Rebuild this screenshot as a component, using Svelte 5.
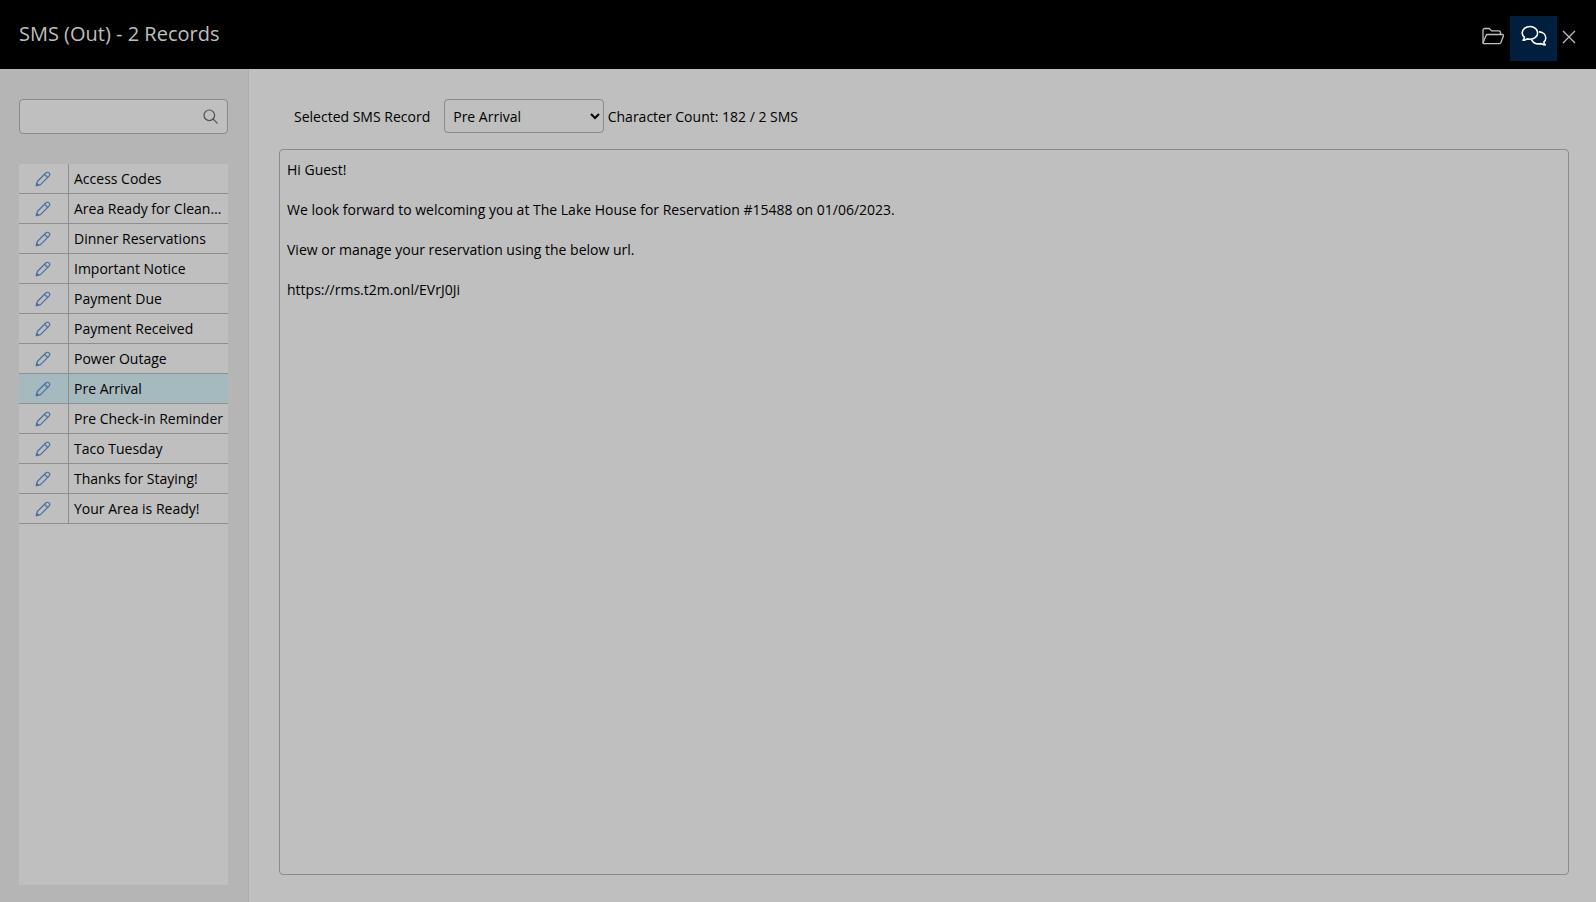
<script lang="ts">
    let templates = [
        "Access Codes",
        "Area Ready for Cleaning",
        "Dinner Reservations",
        "Important Notice",
        "Payment Due",
        "Payment Received",
        "Power Outage",
        "Pre Arrival",
        "Pre Check-in Reminder",
        "Taco Tuesday",
        "Thanks for Staying!",
        "Your Area is Ready!"
    ];

    let selected = "Pre Arrival";
    let records = ["Pre Arrival", "Your Area is Ready!"];

    let message = `Hi Guest!

We look forward to welcoming you at The Lake House for Reservation #15488 on 01/06/2023.

View or manage your reservation using the below url.

https://rms.t2m.onl/EVrJ0Ji`;
</script>

<style>
    :global(body) {
        font-family: "Open Sans", "Noto Sans", sans-serif;
        font-size: 14px;
        color: #000;
        background: #bfbfbf;
    }

    .page {
        height: 902px;
        display: flex;
        flex-direction: column;
        overflow: hidden;
    }

    .top_bar {
        height: 69px;
        flex: none;
        background: #000;
        display: flex;
        justify-content: space-between;
        align-items: flex-start;
        padding-left: 19px;
    }

    .top_bar h1 {
        margin: 20px 0 0;
        font-size: 20px;
        line-height: 27px;
        font-weight: 400;
        color: #bfbfbf;
    }

    .actions {
        display: flex;
        align-items: center;
        margin-top: 16px;
        padding-right: 20px;
    }

    .action {
        display: flex;
        justify-content: center;
        align-items: center;
        height: 45px;
        box-sizing: border-box;
        padding-bottom: 4px;
        color: #bfbfbf;
    }

    .folder { width: 47px; padding-left: 12px; }
    .chat { width: 47px; background: #001f3f; color: #fff; }
    .close { margin-left: 5px; width: 14px; }

    .content {
        flex: 1;
        display: flex;
        min-height: 0;
    }

    aside {
        width: 249px;
        box-sizing: border-box;
        flex: none;
        background: #b5b5b5;
        border-right: 1px solid #adadad;
        padding: 30px 20px 17px 19px;
        display: flex;
        flex-direction: column;
    }

    .search {
        height: 35px;
        box-sizing: border-box;
        border: 1px solid #8a8a8a;
        border-radius: 4px;
        background: #bfbfbf;
        display: flex;
        align-items: center;
        justify-content: flex-end;
        padding-right: 9px;
        color: #4f4f4f;
        flex: none;
    }

    .list {
        margin-top: 30px;
        flex: 1;
        background: #bfbfbf;
    }

    .row {
        display: flex;
        height: 30px;
        box-sizing: border-box;
        border-bottom: 1px solid #8f8f8f;
    }

    .row.active {
        background: #a5babf;
    }

    .edit {
        width: 50px;
        flex: none;
        box-sizing: border-box;
        border-right: 1px solid #8f8f8f;
        display: flex;
        justify-content: center;
        align-items: center;
        color: #4a6ea3;
        padding-right: 1px;
    }

    .name {
        padding-left: 5px;
        line-height: 29px;
        white-space: nowrap;
        overflow: hidden;
        text-overflow: ellipsis;
        min-width: 0;
        padding-right: 5px;
    }

    main {
        flex: 1;
        min-width: 0;
        display: flex;
        flex-direction: column;
        padding: 30px 27px 27px 30px;
    }

    .toolbar {
        display: flex;
        align-items: center;
        height: 34px;
        flex: none;
        margin-bottom: 16px;
    }

    .toolbar label {
        margin-left: 15px;
        margin-right: 14px;
    }

    .toolbar select {
        width: 160px;
        height: 34px;
        box-sizing: border-box;
        border: 1px solid #8a8a8a;
        border-radius: 4px;
        background: #bfbfbf;
        padding: 0 5px 0 4px;
        margin-right: 3.5px;
        font: inherit;
        color: #000;
        outline: none;
    }

    .message {
        flex: 1;
        resize: none;
        box-sizing: border-box;
        width: 100%;
        border: 1px solid #8a8a8a;
        border-radius: 4px;
        background: #bfbfbf;
        padding: 10px 7px;
        font: inherit;
        line-height: 20px;
        color: #000;
        outline: none;
    }
</style>

<div class="page">
    <header class="top_bar">
        <h1>SMS (Out) - 2 Records</h1>
        <div class="actions">
            <div class="action folder">
                <svg width="24" height="19" viewBox="0 0 24 18" fill="none" stroke="currentColor" stroke-width="1.3" stroke-linejoin="round">
                    <path d="M2 15.5V3C2 1.9 2.7 1 3.8 1h4.4l2.4 2.4h7.2c1 0 1.7.7 1.7 1.7V7"/>
                    <path d="M2 15.6 5 8c.2-.6.8-1 1.4-1h15c.8 0 1.3.8 1 1.5l-2.6 6.7c-.3.6-.8 1-1.4 1H3c-.7 0-1.2-.3-1-.6z"/>
                </svg>
            </div>
            <div class="action chat">
                <svg width="28" height="24" viewBox="0 0 28 24" fill="none" stroke="currentColor" stroke-width="1.6" stroke-linejoin="round" stroke-linecap="round">
                    <path d="M10 1.5c4.3 0 7.6 2.8 7.6 6.4s-3.3 6.4-7.6 6.4c-1 0-2-.2-2.9-.4-1 .8-2.4 1.4-4.1 1.4.8-.8 1.3-1.8 1.4-2.9C3 11.2 2.2 9.7 2.2 7.9 2.2 4.3 5.7 1.5 10 1.5z"/>
                    <path d="M19.5 6.9c3.5.4 6.3 2.8 6.3 6 0 1.7-.8 3.1-2 4.1.1 1.1.6 2.1 1.4 2.9-1.6 0-3-.5-4-1.3-.8.2-1.6.3-2.5.3-3.1 0-5.8-1.5-6.9-3.8"/>
                </svg>
            </div>
            <div class="action close">
                <svg width="14" height="14" viewBox="0 0 14 14" fill="none" stroke="currentColor" stroke-width="1.3">
                    <path d="M1 1l12 12M13 1 1 13"/>
                </svg>
            </div>
        </div>
    </header>

    <div class="content">
        <aside>
            <div class="search">
                <svg width="15" height="15" viewBox="0 0 15 15" fill="none" stroke="currentColor" stroke-width="1.2" stroke-linecap="round">
                    <circle cx="6.3" cy="6.3" r="5.3"/>
                    <path d="M10.2 10.2 14.2 14.2"/>
                </svg>
            </div>
            <div class="list">
                {#each templates as name}
                    <div class="row" class:active={name === selected}>
                        <div class="edit">
                            <svg width="16" height="16" viewBox="0 0 16 16" fill="none" stroke="currentColor" stroke-width="1.2" stroke-linejoin="round">
                                <path d="M1.3 14.7 2.3 10.5 10.8 2C11.8 1 13.1 1 14 1.9 14.9 2.8 14.9 4.1 14 5.1L5.5 13.6Z"/>
                                <path d="M9.5 3.3 12.7 6.5"/>
                                <path d="M1.3 14.7 1.8 12.5 3.500 14.200Z" fill="currentColor"/>
                            </svg>
                        </div>
                        <div class="name">{name}</div>
                    </div>
                {/each}
            </div>
        </aside>

        <main>
            <div class="toolbar">
                <label for="record">Selected SMS Record</label>
                <select id="record" bind:value={selected}>
                    {#each records as record}
                        <option value={record}>{record}</option>
                    {/each}
                </select>
                <span>Character Count: 182 / 2 SMS</span>
            </div>
            <textarea class="message" readonly value={message}></textarea>
        </main>
    </div>
</div>
